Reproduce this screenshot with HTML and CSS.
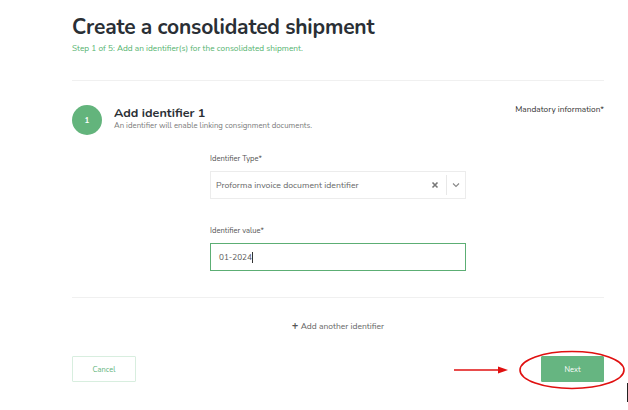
FILE: index.html
```html
<!DOCTYPE html>
<html>
<head>
<meta charset="utf-8">
<link rel="stylesheet" href="styles.css">
</head>
<body>
<div class="page">
  <header class="head">
    <h1 class="title">Create a consolidated shipment</h1>
    <p class="step">Step 1 of 5: Add an identifier(s) for the consolidated shipment.</p>
  </header>
  <section class="section">
    <div class="section-top">
      <div class="badge">1</div>
      <div class="section-text">
        <h2 class="section-title">Add identifier 1</h2>
        <p class="section-sub">An identifier will enable linking consignment documents.</p>
      </div>
      <div class="mandatory">Mandatory information*</div>
    </div>
    <div class="form">
      <label class="label">Identifier Type*</label>
      <div class="select">
        <span class="select-value">Proforma invoice document identifier</span>
        <span class="clear">
          <svg width="8" height="8" viewBox="0 0 8 8"><path d="M1.5 1.5L6.5 6.5M6.5 1.5L1.5 6.5" stroke="#777" stroke-width="1.6"/></svg>
        </span>
        <span class="sep"></span>
        <span class="chev">
          <svg width="8" height="6" viewBox="0 0 8 6"><path d="M1 1.5L4 4.5L7 1.5" fill="none" stroke="#888" stroke-width="1.1"/></svg>
        </span>
      </div>
      <label class="label label-2">Identifier value*</label>
      <div class="input"><span>01-2024</span><span class="caret"></span></div>
    </div>
  </section>
  <div class="add-row">
    <span class="plus">+</span> Add another identifier
  </div>
  <div class="actions">
    <button class="btn btn-cancel">Cancel</button>
    <button class="btn btn-next">Next</button>
  </div>
</div>
<svg class="annot" width="628" height="410" viewBox="0 0 628 410">
  <line x1="454" y1="370" x2="500" y2="370" stroke="#e01010" stroke-width="1.3"/>
  <path d="M498 366.5L508 370L498 373.5Z" fill="#e01010"/>
  <ellipse cx="572" cy="370" rx="52" ry="18.5" fill="none" stroke="#e01010" stroke-width="1.6"/>
</svg>
<div class="cursor"></div>
</body>
</html>
```
FILE: styles.css
```css
* { box-sizing: border-box; }
html, body { margin: 0; padding: 0; background: #fff; }
body {
  font-family: "Nunito", "Lato", "Open Sans", sans-serif;
  color: #2b2f33;
  width: 628px;
  height: 410px;
  overflow: hidden;
  position: relative;
}
.page {
  width: 604px;
  padding-left: 72px;
}
.head {
  padding-top: 12px;
  height: 81px;
  border-bottom: 1px solid #f0f0f0;
}
.title {
  margin: 0;
  font-size: 21px;
  line-height: 30px;
  font-weight: 700;
  color: #2a2f35;
  letter-spacing: -0.2px;
}
.step {
  margin: 1px 0 0;
  font-size: 8.3px;
  line-height: 11px;
  color: #55b36f;
}
.section {
  border-bottom: 1px solid #f0f0f0;
  height: 217px;
}
.section-top {
  display: flex;
  align-items: flex-start;
  padding-top: 24px;
}
.badge {
  width: 30px;
  height: 30px;
  border-radius: 50%;
  background: #63b47c;
  color: #fff;
  font-size: 8px;
  font-weight: 700;
  display: flex;
  align-items: center;
  justify-content: center;
  flex: none;
}
.section-text {
  margin-left: 12px;
  flex: 1;
}
.section-title {
  margin: -1px 0 0;
  font-size: 12.6px;
  line-height: 17px;
  font-weight: 700;
  color: #2a2f35;
}
.section-sub {
  margin: 0;
  font-size: 7.8px;
  line-height: 10px;
  color: #7a7a7a;
}
.mandatory {
  font-size: 8.3px;
  line-height: 10px;
  margin-top: 0;
  color: #333;
}
.form {
  margin-left: 138px;
  width: 256px;
  padding-top: 19px;
}
.label {
  display: block;
  font-size: 7.6px;
  line-height: 10px;
  color: #555;
}
.label-2 { margin-top: 27px; }
.select {
  margin-top: 7px;
  height: 28px;
  border: 1px solid #ececec;
  display: flex;
  align-items: center;
  padding-left: 5px;
}
.select-value {
  flex: 1;
  font-size: 8.7px;
  color: #666;
}
.clear { width: 10px; display: flex; align-items: center; margin-right: 5px; }
.sep { width: 1px; height: 20px; background: #e8e8e8; }
.chev { width: 18px; display: flex; align-items: center; justify-content: center; }
.input {
  margin-top: 7px;
  height: 28px;
  border: 1px solid #5cae74;
  display: flex;
  align-items: center;
  padding-left: 8px;
  font-size: 8.2px;
  color: #555;
}
.caret { width: 1px; height: 11px; background: #333; margin-left: 0.5px; }
.add-row {
  margin-top: 20px;
  height: 12px;
  text-align: center;
  font-size: 8.5px;
  color: #666;
  width: 532px;
  padding-left: 0;
}
.plus { font-size: 11px; font-weight: 700; color: #555; }
.actions {
  display: flex;
  justify-content: space-between;
  width: 532px;
  margin-top: 26px;
}
.btn {
  height: 26px;
  width: 64px;
  font-family: inherit;
  font-size: 7.5px;
  border-radius: 1px;
}
.btn-cancel {
  background: #fff;
  border: 1px solid #d8eedf;
  color: #62b47c;
}
.btn-next {
  width: 63px;
  background: #66b581;
  border: 1px solid #66b581;
  color: #fff;
}
.annot { position: absolute; left: 0; top: 0; pointer-events: none; }
.cursor {
  position: absolute;
  left: 627px;
  top: 383px;
  width: 1px;
  height: 19px;
  background: #222;
}
```
